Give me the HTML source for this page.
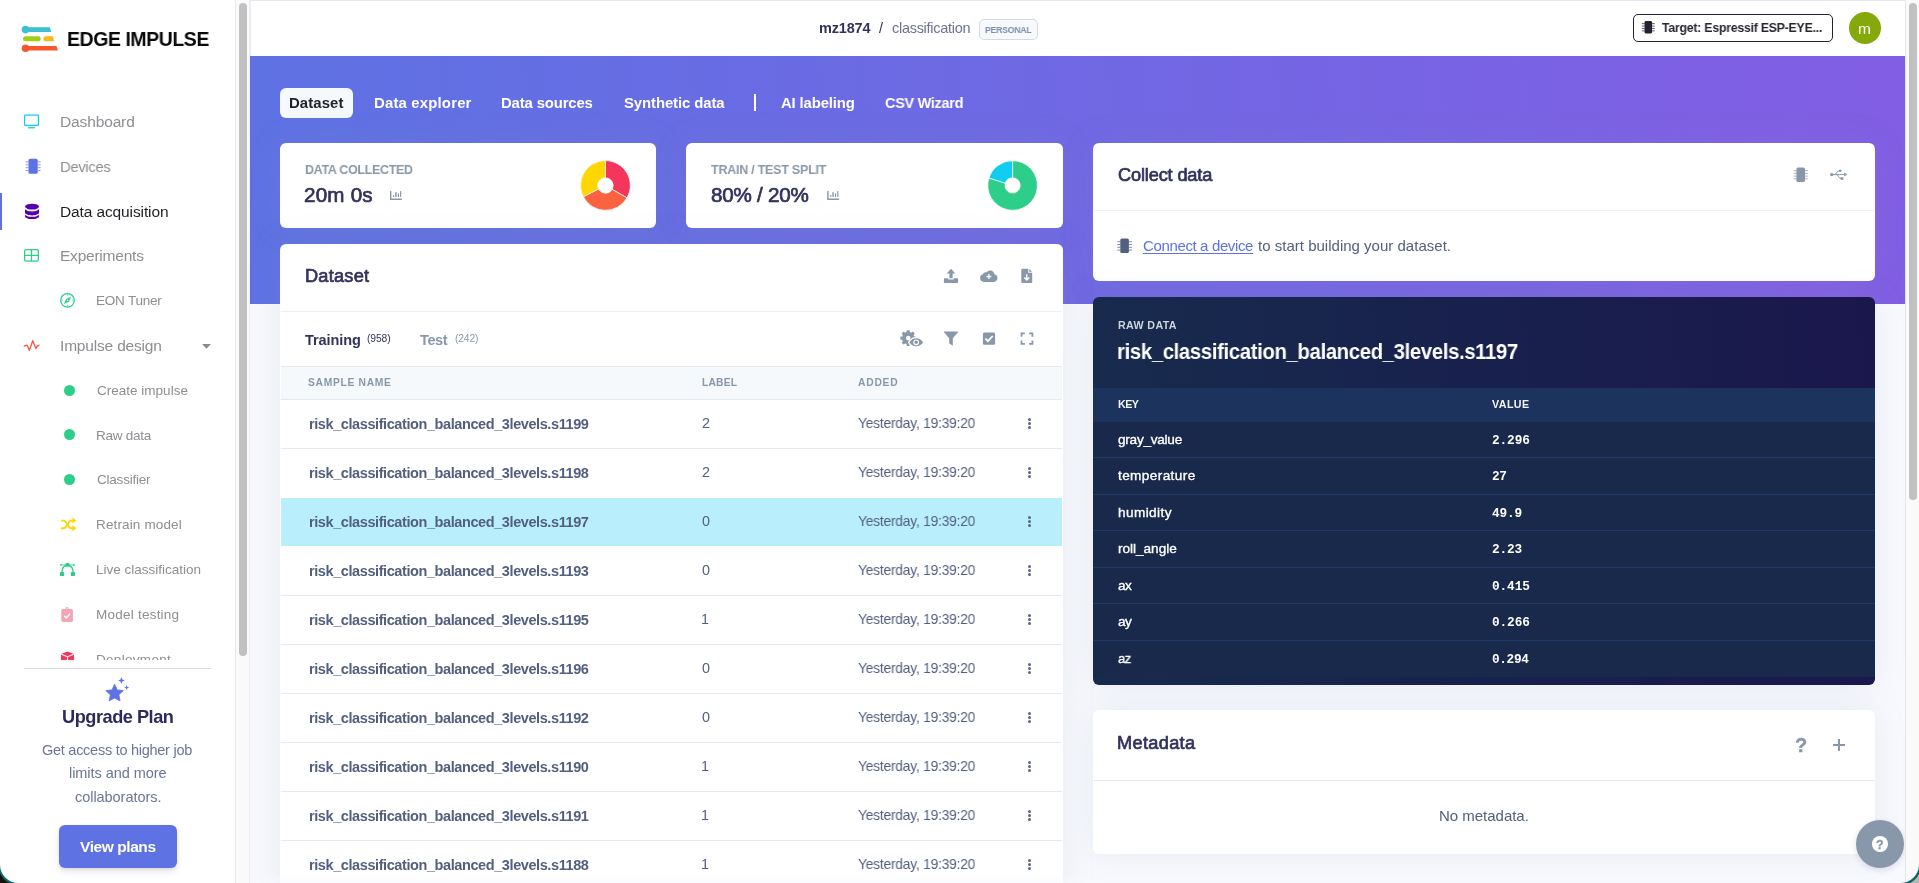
<!DOCTYPE html>
<html lang="en">
<head>
<meta charset="utf-8">
<title>Data acquisition - classification - Edge Impulse</title>
<style>
*{box-sizing:border-box;margin:0;padding:0}
html,body{width:1919px;height:883px;overflow:hidden;background:#f8f9fe;font-family:"Liberation Sans",sans-serif;color:#32325d}
body{position:relative}
.a{position:absolute}
.t{position:absolute;white-space:pre;z-index:2;will-change:transform}
svg{position:absolute;overflow:visible}
.card{position:absolute;background:#fff;border-radius:6px;box-shadow:0 0 32px 0 rgba(136,152,170,.15)}
.hr{position:absolute;height:1px;background:#f0f1f5}
.rowline{position:absolute;left:281px;width:781px;height:1px;background:#e6e9ef}
.kvline{position:absolute;left:1093px;width:782px;height:1px;background:#1f3a68}
.dot{position:absolute;left:64px;width:11px;height:11px;border-radius:50%;background:#2dce89}
.kb{position:absolute;left:1028px;width:3.4px;height:3.4px;border-radius:50%;background:#5a6785}
</style>
</head>
<body>
<!-- ===== page backgrounds ===== -->
<div class="a" id="hero" style="left:250px;top:56px;width:1656px;height:248px;background:linear-gradient(87deg,#5e72e4 0,#825ee4 100%)"></div>
<div class="a" id="topbar" style="left:250px;top:0;width:1656px;height:56px;background:#fff;border-top:1px solid #e4e7ee;border-left:1px solid #e9ecf1"></div>
<!-- sidebar -->
<div class="a" id="sidebar" style="left:0;top:0;width:235px;height:883px;background:#fff"></div>
<div class="a" style="left:235px;top:0;width:15px;height:883px;background:#fafafa;border-left:1px solid #e8e8e8;border-right:1px solid #eeeef2"></div>
<div class="a" style="left:239px;top:3px;width:8px;height:653px;border-radius:4px;background:#c1c1c1"></div>
<div class="a" style="left:0;top:193px;width:2px;height:37px;background:#5e72e4"></div>
<!-- page scrollbar -->
<div class="a" style="left:1905px;top:0;width:14px;height:883px;background:#fafafa;border-left:1px solid #e4e5ea;z-index:5"></div>
<div class="a" style="left:1909px;top:3px;width:8px;height:497px;border-radius:4px;background:#c1c1c1;z-index:6"></div>

<!-- ===== sidebar content ===== -->
<svg style="left:0;top:0" width="236" height="883" viewBox="0 0 236 883">
  <!-- logo -->
  <g>
    <circle cx="25.5" cy="29.6" r="3.8" fill="#3bbfd1"/>
    <path d="M25 27.2H49.9L51.3 32.1H25Z" fill="#3bbfd1"/>
    <rect x="23" y="36.3" width="17.7" height="5" rx="2.5" fill="#a2cf14"/>
    <path d="M45.9 36.3H52.7L54.3 41.3H45.9A2.5 2.5 0 0 1 45.9 36.3Z" fill="#fdb714"/>
    <circle cx="25.5" cy="48.2" r="3.8" fill="#f9582c"/>
    <path d="M25 46H56.4L58 50.4H25Z" fill="#f9582c"/>
  </g>
  <!-- dashboard monitor -->
  <rect x="24.6" y="115.2" width="13.8" height="10.2" rx=".6" fill="none" stroke="#11cdef" stroke-width="1.2"/>
  <rect x="28" y="127.1" width="7" height="1.3" fill="#11cdef"/>
  <!-- devices chip -->
  <g fill="#5e72e4">
    <rect x="28.5" y="158.8" width="9.2" height="15" rx="1.6"/>
    <g opacity=".75">
      <rect x="25.6" y="161.4" width="2.9" height="1"/><rect x="25.6" y="164.3" width="2.9" height="1"/><rect x="25.6" y="167.2" width="2.9" height="1"/><rect x="25.6" y="170.1" width="2.9" height="1"/>
      <rect x="37.7" y="161.4" width="2.9" height="1"/><rect x="37.7" y="164.3" width="2.9" height="1"/><rect x="37.7" y="167.2" width="2.9" height="1"/><rect x="37.7" y="170.1" width="2.9" height="1"/>
    </g>
  </g>
  <!-- database -->
  <g fill="#5603ad">
    <ellipse cx="32.05" cy="206.6" rx="7.05" ry="2.9"/>
    <path d="M25 208.6c0 1.6 3.2 2.9 7.05 2.9s7.05-1.3 7.05-2.9v3.9c0 1.6-3.2 2.9-7.05 2.9S25 214.100 25 212.500Z"/>
    <path d="M25 213.900c0 1.6 3.2 2.9 7.05 2.9s7.05-1.3 7.05-2.9v2.300c0 1.6-3.2 2.900-7.05 2.900S25 217.800 25 216.200Z"/>
  </g>
  <!-- experiments table -->
  <g fill="none" stroke="#2dce89" stroke-width="1.3">
    <rect x="24.65" y="249.65" width="13.7" height="11.5" rx="1.3"/>
    <path d="M24.65 255.4H38.35M31.5 249.65V261.15"/>
  </g>
  <!-- compass -->
  <g>
    <circle cx="67.5" cy="300.3" r="6.8" fill="none" stroke="#2dce89" stroke-width="1.25"/>
    <path d="M71.1 296.7L68.9 301.7L63.9 303.9L66.1 298.9Z" fill="#2dce89"/>
    <circle cx="67.5" cy="300.3" r=".8" fill="#fff"/>
    <path d="M67.5 294.2v1.2M67.5 305.2v1.2M61.4 300.3h1.2M72.4 300.3h1.2" stroke="#2dce89" stroke-width=".9"/>
  </g>
  <!-- pulse -->
  <path d="M24.2 346.1L27 345.1L29.4 350.4L32.75 340.7L35.9 348.6L37.1 346.2L39 345.3" fill="none" stroke="#f5533d" stroke-width="1.3" stroke-linejoin="round" stroke-linecap="round"/>
  <!-- caret -->
  <path d="M202.1 344H210.9L206.5 348.75Z" fill="#8a8a8e"/>
  <!-- shuffle -->
  <g fill="none" stroke="#ffd600" stroke-width="1.9">
    <path d="M61 520.6H63.6C66.6 520.6 68.300 528.3 71.200 528.3H73"/>
    <path d="M61 528.3H63.6C66.6 528.3 68.300 520.6 71.200 520.6H73"/>
  </g>
  <path d="M72.400 517.6L76.500 520.600L72.400 523.6ZM72.400 525.3L76.500 528.300L72.400 531.3Z" fill="#ffd600"/>
  <!-- bezier -->
  <g fill="#2dce89">
    <rect x="60" y="572" width="4.100" height="4" rx=".6"/><rect x="70.900" y="572" width="4.100" height="4" rx=".6"/>
    <rect x="65.600" y="563" width="3.800" height="3.800" rx=".6"/>
    <circle cx="61" cy="564.900" r=".9"/><circle cx="74" cy="564.900" r=".9"/>
  </g>
  <g fill="none" stroke="#2dce89">
    <path d="M61.500 564.900H73.500" stroke-width=".8"/>
    <path d="M62 572.200C62 568.400 63.800 566.100 66 565.500M73 572.200C73 568.400 71.200 566.100 69 565.500" stroke-width="1.3"/>
  </g>
  <!-- clipboard check -->
  <g>
    <path d="M62.900 609H71.300A1.600 1.600 0 0 1 72.900 610.600V620.300A1.600 1.600 0 0 1 71.300 621.900H62.900A1.600 1.600 0 0 1 61.300 620.300V610.600A1.600 1.600 0 0 1 62.900 609Z" fill="#f3a4b5"/>
    <circle cx="67.100" cy="608.700" r="1.700" fill="#f3a4b5"/><circle cx="67.100" cy="608.600" r=".55" fill="#fff"/>
    <path d="M64.300 615.900L66.300 617.900L70 613.800" fill="none" stroke="#fff" stroke-width="1.500"/>
  </g>
  <!-- deployment cube (clipped by upgrade panel) -->
  <g>
    <path d="M67.500 651.500L74 654V662L67.500 664.600L61 662V654Z" fill="#f5365c"/>
    <path d="M61.300 654.200L67.500 656.700L73.700 654.200M67.500 656.700V664" fill="none" stroke="#fff" stroke-width="1.100"/>
  </g>
</svg>
<div class="dot" style="top:385.2px"></div>
<div class="dot" style="top:429.300px"></div>
<div class="dot" style="top:474.300px"></div>

<!-- upgrade panel (covers clipped nav) -->
<div class="a" style="left:0;top:660px;width:235px;height:223px;background:#fff;z-index:2"></div>
<div class="a" style="left:24px;top:668px;width:187px;height:1px;background:#dcdcdf;z-index:3"></div>
<svg style="left:0;top:660px;z-index:3" width="235" height="60" viewBox="0 660 235 60">
  <g fill="#5e72e4">
    <path d="M114.600 684.200L117.250 689.900L123.400 690.600L118.850 694.850L120.050 700.900L114.600 697.900L109.150 700.900L110.350 694.850L105.800 690.600L111.950 689.900Z" stroke="#5e72e4" stroke-width=".8" stroke-linejoin="round"/>
    <path d="M121.400 677.100L122.300 679.600L124.800 680.500L122.300 681.400L121.400 683.900L120.500 681.400L118 680.500L120.500 679.600Z"/>
    <path d="M126.700 684.900L127.400 686.900L129.400 687.600L127.400 688.300L126.700 690.300L126 688.300L124 687.600L126 686.900Z"/>
  </g>
</svg>
<div class="a" style="left:59px;top:825px;width:118px;height:43px;border-radius:6px;background:#5e72e4;box-shadow:0 4px 6px rgba(50,50,93,.11),0 1px 3px rgba(0,0,0,.08);z-index:3"></div>
<!-- window corners -->
<svg style="left:0;top:853px;z-index:9" width="30" height="30" viewBox="0 853 30 30">
  <path d="M0 858V883H18.4A18.4 18.4 0 0 1 0 865Z" fill="#0a6b70"/>
  <path d="M0 873.3V883H9.2A20.2 20.2 0 0 1 0 873.3Z" fill="#1a0f0b"/>
</svg>
<svg style="left:1889px;top:853px;z-index:9" width="30" height="30" viewBox="1889 853 30 30">
  <path d="M1919 862V883H1900.500A18.500 18.500 0 0 0 1919 865Z" fill="#06635f"/>
  <path d="M1919 873.8V883H1910.3A20.5 20.5 0 0 0 1919 873.8Z" fill="#b4b4b4"/>
</svg>

<!-- ===== top bar ===== -->
<div class="a" style="left:979px;top:19px;width:59px;height:21px;border:1px solid #d3dae6;border-radius:5px;background:#f7f9fc"></div>
<div class="a" style="left:1633px;top:14px;width:200px;height:28px;border:1px solid #23232d;border-radius:5px;background:#fff"></div>
<svg style="left:1640px;top:20px" width="16" height="15" viewBox="1640 20 16 15">
  <g fill="#23232d">
    <rect x="1644.500" y="21" width="7.600" height="12.500" rx="1.400"/>
    <g opacity=".8"><rect x="1641.900" y="23.200" width="2.600" height=".9"/><rect x="1641.900" y="25.600" width="2.600" height=".9"/><rect x="1641.900" y="28" width="2.600" height=".9"/><rect x="1641.900" y="30.400" width="2.600" height=".9"/>
    <rect x="1652.100" y="23.200" width="2.600" height=".9"/><rect x="1652.100" y="25.600" width="2.600" height=".9"/><rect x="1652.100" y="28" width="2.600" height=".9"/><rect x="1652.100" y="30.400" width="2.600" height=".9"/></g>
  </g>
</svg>
<div class="a" style="left:1849px;top:12px;width:32px;height:32px;border-radius:50%;background:#85a80a"></div>

<!-- ===== tabs ===== -->
<div class="a" style="left:280px;top:87.500px;width:73px;height:30.500px;border-radius:6px;background:#f6f9fc"></div>
<div class="a" style="left:754px;top:94px;width:2px;height:17px;background:#fff"></div>

<!-- ===== stat cards ===== -->
<div class="card" style="left:280px;top:143px;width:376px;height:85px"></div>
<div class="card" style="left:686px;top:143px;width:377px;height:85px"></div>
<svg style="left:380px;top:185px" width="470" height="20" viewBox="380 185 470 20">
  <g fill="#8898aa"><path d="M390.00 190.9h1.4v7.6h10.5v1.4h-11.9Z"/><rect x="393.00" y="194.9" width="1.2" height="2" rx=".5"/><rect x="395.00" y="192.1" width="1.8" height="4.8" rx=".4" opacity=".8"/><rect x="397.80" y="193.2" width="1.2" height="3.7" rx=".5"/><rect x="400.00" y="191" width="1.2" height="5.9" rx=".5"/></g>
  <g fill="#8898aa"><path d="M827.20 190.9h1.4v7.6h10.5v1.4h-11.9Z"/><rect x="830.20" y="194.9" width="1.2" height="2" rx=".5"/><rect x="832.20" y="192.1" width="1.8" height="4.8" rx=".4" opacity=".8"/><rect x="835.00" y="193.2" width="1.2" height="3.7" rx=".5"/><rect x="837.20" y="191" width="1.2" height="5.9" rx=".5"/></g>
</svg>
<svg style="left:570px;top:150px" width="480" height="70" viewBox="570 150 480 70"><path d="M605.45 160.60A24.85 24.85 0 0 1 626.97 197.87L612.12 189.30A7.7 7.7 0 0 0 605.45 177.75Z" fill="#f5365c" stroke="#fff" stroke-width=".7"/><path d="M626.97 197.87A24.85 24.85 0 0 1 583.31 196.73L598.59 188.95A7.7 7.7 0 0 0 612.12 189.30Z" fill="#fb6340" stroke="#fff" stroke-width=".7"/><path d="M583.31 196.73A24.85 24.85 0 0 1 605.45 160.60L605.45 177.75A7.7 7.7 0 0 0 598.59 188.95Z" fill="#ffd600" stroke="#fff" stroke-width=".7"/><path d="M1012.60 160.65A24.8 24.8 0 1 1 988.95 177.99L1005.35 183.16A7.6 7.6 0 1 0 1012.60 177.85Z" fill="#2dce89" stroke="#fff" stroke-width=".7"/><path d="M988.95 177.99A24.8 24.8 0 0 1 1012.60 160.65L1012.60 177.85A7.6 7.6 0 0 0 1005.35 183.16Z" fill="#11cdef" stroke="#fff" stroke-width=".7"/></svg>

<!-- ===== dataset card ===== -->
<div class="card" style="left:280px;top:244px;width:783px;height:660px"></div>
<div class="hr" style="left:281px;top:311px;width:781px"></div>
<div class="a" style="left:281px;top:366px;width:781px;height:34px;background:#f6f9fc;border-top:1px solid #e6e9ef;border-bottom:1px solid #e6e9ef"></div>
<div class="a" style="left:281px;top:498px;width:781px;height:48px;background:#b9effc"></div>
<div class="rowline" style="top:448px"></div><div class="rowline" style="top:595px"></div><div class="rowline" style="top:644px"></div><div class="rowline" style="top:693px"></div><div class="rowline" style="top:742px"></div><div class="rowline" style="top:791px"></div><div class="rowline" style="top:840px"></div>
<svg style="left:895px;top:260px" width="145" height="95" viewBox="895 260 145 95">
  <g fill="#8898aa">
    <!-- upload -->
    <path d="M951 268.750L955.300 273.400H952.600V278.300H949.400V273.400H946.700Z"/>
    <path d="M944.600 278.200H948.300V279.500H953.700V278.200H957.400A.7 .7 0 0 1 958.100 278.900V282.200A.7 .7 0 0 1 957.400 282.900H944.600A.7 .7 0 0 1 943.900 282.200V278.900A.7 .7 0 0 1 944.600 278.200Z"/>
    <!-- cloud -->
    <path d="M984 281.900A3.900 3.900 0 0 1 982.800 274.300A3.300 3.300 0 0 1 986.600 272.300A4.300 4.300 0 0 1 994.400 274.200A3.900 3.900 0 0 1 993.700 281.900Z"/>
    <!-- file download -->
    <path d="M1022.300 268.750H1028.300V272.700H1032.200V281.900A1 1 0 0 1 1031.200 282.900H1022.300A1 1 0 0 1 1021.300 281.900V269.750A1 1 0 0 1 1022.300 268.750ZM1029.200 268.900L1032.100 271.800H1029.200Z"/>
    <!-- gear -->
    <path d="M906.900 330.200H909.500L909.900 332.100L911.300 332.700L912.900 331.600L914.700 333.400L913.600 335L914.200 336.400L916.100 336.800V339.400L914.200 339.800L913.600 341.200L914.700 342.800L912.900 344.600L911.300 343.500L909.900 344.100L909.500 346H906.900L906.500 344.100L905.100 343.500L903.500 344.600L901.700 342.800L902.800 341.200L902.200 339.800L900.300 339.400V336.800L902.200 336.400L902.800 335L901.700 333.400L903.500 331.600L905.100 332.700L906.500 332.100Z"/>
    <!-- filter -->
    <path d="M944.400 331.500H957.600A.5 .5 0 0 1 958 332.300L952.800 338.300V345.800L949.200 343.300V338.300L944 332.300A.5 .5 0 0 1 944.400 331.500Z"/>
    <!-- check square -->
    <rect x="982.900" y="332.500" width="12.200" height="12.200" rx="1.500"/>
  </g>
  <circle cx="908.200" cy="338.100" r="2.300" fill="#fff"/>
  <!-- eye -->
  <path d="M908.600 342.300C910.600 339 913.400 337.700 916.200 337.700S921.800 339 923.900 342.300C921.800 345.600 919 346.900 916.200 346.900S910.600 345.600 908.600 342.300Z" fill="#8898aa" stroke="#fff" stroke-width="1.300"/>
  <circle cx="916.200" cy="342.300" r="2.900" fill="#fff"/><circle cx="916.200" cy="342.300" r="1.700" fill="#8898aa"/>
  <!-- cloud plus -->
  <path d="M988.900 274.100V278.900M986.500 276.500H991.300" stroke="#fff" stroke-width="1.300" fill="none"/>
  <!-- file arrow -->
  <path d="M1026.750 274.300V279.700M1024.300 277.500L1026.750 280L1029.200 277.500" stroke="#fff" stroke-width="1.400" fill="none"/>
  <!-- check -->
  <path d="M985.400 338.700L987.900 341.200L992.700 336" stroke="#fff" stroke-width="1.700" fill="none"/>
  <!-- expand -->
  <path d="M1021.500 336.700V333.400H1024.800M1029.100 333.400H1032.400V336.700M1032.400 340.500V343.800H1029.100M1024.800 343.800H1021.500V340.500" stroke="#8898aa" stroke-width="1.800" fill="none"/>
</svg>
<div class="kb" style="top:418.0px"></div><div class="kb" style="top:421.9px"></div><div class="kb" style="top:425.8px"></div><div class="kb" style="top:467.0px"></div><div class="kb" style="top:470.9px"></div><div class="kb" style="top:474.8px"></div><div class="kb" style="top:516.0px"></div><div class="kb" style="top:519.9px"></div><div class="kb" style="top:523.8px"></div><div class="kb" style="top:565.0px"></div><div class="kb" style="top:568.9px"></div><div class="kb" style="top:572.8px"></div><div class="kb" style="top:614.0px"></div><div class="kb" style="top:617.9px"></div><div class="kb" style="top:621.8px"></div><div class="kb" style="top:663.0px"></div><div class="kb" style="top:666.9px"></div><div class="kb" style="top:670.8px"></div><div class="kb" style="top:712.0px"></div><div class="kb" style="top:715.9px"></div><div class="kb" style="top:719.8px"></div><div class="kb" style="top:761.0px"></div><div class="kb" style="top:764.9px"></div><div class="kb" style="top:768.8px"></div><div class="kb" style="top:810.0px"></div><div class="kb" style="top:813.9px"></div><div class="kb" style="top:817.8px"></div><div class="kb" style="top:859.0px"></div><div class="kb" style="top:862.9px"></div><div class="kb" style="top:866.8px"></div>
<!-- fade at bottom of dataset card -->
<div class="a" style="left:270px;top:873px;width:810px;height:10px;background:linear-gradient(to bottom,rgba(248,249,254,0),rgba(248,249,254,.6));z-index:4"></div>

<!-- ===== collect data ===== -->
<div class="card" style="left:1093px;top:143px;width:782px;height:138px"></div>
<div class="hr" style="left:1094px;top:210px;width:780px"></div>
<svg style="left:1110px;top:160px" width="745" height="100" viewBox="1110 160 745 100">
  <g fill="#525f7f">
    <rect x="1120.300" y="238.500" width="8.600" height="14.600" rx="1.500"/>
    <g opacity=".75"><rect x="1117.300" y="241.200" width="3" height="1"/><rect x="1117.300" y="244" width="3" height="1"/><rect x="1117.300" y="246.800" width="3" height="1"/><rect x="1117.300" y="249.600" width="3" height="1"/>
    <rect x="1128.900" y="241.200" width="3" height="1"/><rect x="1128.900" y="244" width="3" height="1"/><rect x="1128.900" y="246.800" width="3" height="1"/><rect x="1128.900" y="249.600" width="3" height="1"/></g>
  </g>
  <g fill="#8898aa">
    <rect x="1796.400" y="167.600" width="8.600" height="14.300" rx="1.500"/>
    <g opacity=".75"><rect x="1793.700" y="170.200" width="2.700" height="1"/><rect x="1793.700" y="172.900" width="2.700" height="1"/><rect x="1793.700" y="175.600" width="2.700" height="1"/><rect x="1793.700" y="178.300" width="2.700" height="1"/>
    <rect x="1805" y="170.200" width="2.800" height="1"/><rect x="1805" y="172.900" width="2.800" height="1"/><rect x="1805" y="175.600" width="2.800" height="1"/><rect x="1805" y="178.300" width="2.800" height="1"/></g>
    <!-- usb -->
    <circle cx="1831.700" cy="174.600" r="1.700"/>
    <path d="M1844.200 172.600L1847.300 174.600L1844.200 176.600Z"/>
    <circle cx="1840.200" cy="170.700" r="1.300"/>
    <rect x="1840.700" y="177.200" width="2.700" height="2.700"/>
  </g>
  <g fill="none" stroke="#8898aa" stroke-width="1">
    <path d="M1832 174.600H1845"/>
    <path d="M1834.500 174.600C1836.500 174.600 1836.500 170.700 1839.500 170.700"/>
    <path d="M1836.500 174.600C1838.500 174.600 1838.500 178.500 1841 178.500"/>
  </g>
</svg>

<!-- ===== raw data ===== -->
<div class="a" style="left:1093px;top:297px;width:782px;height:388px;border-radius:6px;background:linear-gradient(87deg,#172b4d 0,#1a174d 100%);box-shadow:0 0 32px 0 rgba(136,152,170,.15);overflow:hidden">
  <div class="a" style="left:0;top:91px;width:782px;height:34px;background:#1c345d"></div>
  <div class="a" style="left:0;top:125px;width:782px;height:255px;background:#19294b"></div>
</div>
<div class="kvline" style="top:457.0px"></div><div class="kvline" style="top:493.5px"></div><div class="kvline" style="top:530.0px"></div><div class="kvline" style="top:566.5px"></div><div class="kvline" style="top:603.0px"></div><div class="kvline" style="top:639.5px"></div>

<!-- ===== metadata ===== -->
<div class="card" style="left:1093px;top:710px;width:782px;height:144px"></div>
<div class="hr" style="left:1094px;top:780px;width:780px;background:#e6e9ef"></div>
<div class="a" style="left:1832.600px;top:743.700px;width:12.400px;height:2.300px;background:#8898aa"></div>
<div class="a" style="left:1837.650px;top:738.600px;width:2.300px;height:12.400px;background:#8898aa"></div>
<!-- help -->
<div class="a" style="left:1856px;top:820px;width:48px;height:48px;border-radius:50%;background:#8898aa;z-index:4;box-shadow:0 2px 6px rgba(50,50,93,.15)"></div>
<div class="a" style="left:1872.100px;top:836.300px;width:15.600px;height:15.600px;border-radius:50%;background:#fff;z-index:4"></div>

<!-- ===== texts ===== -->
<span class="t" style="left:67.44px;top:25px;font-size:20.3px;line-height:28px;letter-spacing:-0.483px;color:#0a0a0a;font-weight:bold;transform:scaleX(0.9623);transform-origin:0 0;">EDGE IMPULSE</span>
<span class="t" style="left:59.60px;top:110px;font-size:15.5px;line-height:23px;letter-spacing:-0.132px;color:#8e8e93;">Dashboard</span>
<span class="t" style="left:59.65px;top:155px;font-size:15.5px;line-height:23px;letter-spacing:-0.317px;color:#8e8e93;transform:scaleX(0.9528);transform-origin:0 0;">Devices</span>
<span class="t" style="left:59.60px;top:200px;font-size:15.5px;line-height:23px;letter-spacing:-0.118px;color:#1f1f24;">Data acquisition</span>
<span class="t" style="left:59.60px;top:244px;font-size:15.5px;line-height:23px;letter-spacing:-0.224px;color:#8e8e93;">Experiments</span>
<span class="t" style="left:95.50px;top:290px;font-size:13.5px;line-height:21px;letter-spacing:-0.209px;color:#8e8e93;">EON Tuner</span>
<span class="t" style="left:59.60px;top:334px;font-size:15.5px;line-height:23px;letter-spacing:-0.180px;color:#8e8e93;">Impulse design</span>
<span class="t" style="left:96.50px;top:380px;font-size:13.5px;line-height:21px;letter-spacing:0.009px;color:#8e8e93;">Create impulse</span>
<span class="t" style="left:95.50px;top:425px;font-size:13.5px;line-height:21px;letter-spacing:-0.253px;color:#8e8e93;">Raw data</span>
<span class="t" style="left:96.50px;top:469px;font-size:13.5px;line-height:21px;letter-spacing:-0.213px;color:#8e8e93;">Classifier</span>
<span class="t" style="left:95.50px;top:514px;font-size:13.5px;line-height:21px;letter-spacing:0.143px;color:#8e8e93;">Retrain model</span>
<span class="t" style="left:95.50px;top:559px;font-size:13.5px;line-height:21px;letter-spacing:-0.002px;color:#8e8e93;">Live classification</span>
<span class="t" style="left:95.50px;top:604px;font-size:13.5px;line-height:21px;letter-spacing:0.234px;color:#8e8e93;">Model testing</span>
<span class="t" style="left:95.50px;top:649px;font-size:13.5px;line-height:21px;letter-spacing:0.302px;color:#8e8e93;z-index:1;">Deployment</span>
<span class="t" style="left:61.80px;top:704px;font-size:18.2px;line-height:26px;letter-spacing:-0.484px;color:#2b2c5c;font-weight:bold;z-index:3;">Upgrade Plan</span>
<span class="t" style="left:42.40px;top:739px;font-size:14.5px;line-height:22px;letter-spacing:-0.265px;color:#6a7694;z-index:3;">Get access to higher job</span>
<span class="t" style="left:68.80px;top:762px;font-size:14.5px;line-height:22px;letter-spacing:-0.053px;color:#6a7694;z-index:3;">limits and more</span>
<span class="t" style="left:74.80px;top:786px;font-size:14.5px;line-height:22px;letter-spacing:-0.047px;color:#6a7694;z-index:3;">collaborators.</span>
<span class="t" style="left:80.00px;top:835px;font-size:15.5px;line-height:23px;letter-spacing:-0.423px;color:#ffffff;font-weight:bold;z-index:3;">View plans</span>
<span class="t" style="left:819.00px;top:17px;font-size:14.5px;line-height:22px;letter-spacing:-0.167px;color:#32325d;font-weight:bold;">mz1874</span>
<span class="t" style="left:879.00px;top:17px;font-size:14.5px;line-height:22px;letter-spacing:0.000px;color:#32325d;">/</span>
<span class="t" style="left:892.10px;top:17px;font-size:14.5px;line-height:22px;letter-spacing:-0.287px;color:#6b7391;">classification</span>
<span class="t" style="left:985.40px;top:21px;font-size:9.8px;line-height:17px;letter-spacing:-0.272px;color:#7d90ad;font-weight:bold;transform:scaleX(0.8888);transform-origin:0 0;">PERSONAL</span>
<span class="t" style="left:1662.40px;top:17px;font-size:13.5px;line-height:21px;letter-spacing:-0.236px;color:#26262f;font-weight:bold;transform:scaleX(0.9084);transform-origin:0 0;">Target: Espressif ESP-EYE...</span>
<span class="t" style="left:1858.20px;top:17px;font-size:15.5px;line-height:23px;letter-spacing:0.000px;color:#ffffff;">m</span>
<span class="t" style="left:288.70px;top:92px;font-size:14.9px;line-height:22px;letter-spacing:0.110px;color:#212529;font-weight:bold;">Dataset</span>
<span class="t" style="left:373.50px;top:92px;font-size:14.9px;line-height:22px;letter-spacing:0.185px;color:#ffffff;font-weight:bold;">Data explorer</span>
<span class="t" style="left:500.70px;top:92px;font-size:14.9px;line-height:22px;letter-spacing:-0.149px;color:#ffffff;font-weight:bold;">Data sources</span>
<span class="t" style="left:624.10px;top:92px;font-size:14.9px;line-height:22px;letter-spacing:-0.092px;color:#ffffff;font-weight:bold;">Synthetic data</span>
<span class="t" style="left:781.10px;top:92px;font-size:14.9px;line-height:22px;letter-spacing:-0.149px;color:#ffffff;font-weight:bold;">AI labeling</span>
<span class="t" style="left:885.40px;top:92px;font-size:14.9px;line-height:22px;letter-spacing:-0.324px;color:#ffffff;font-weight:bold;transform:scaleX(0.9736);transform-origin:0 0;">CSV Wizard</span>
<span class="t" style="left:305.40px;top:159px;font-size:13.4px;line-height:21px;letter-spacing:-0.326px;color:#8898aa;font-weight:bold;transform:scaleX(0.9312);transform-origin:0 0;">DATA COLLECTED</span>
<span class="t" style="left:304.40px;top:180px;font-size:20.6px;line-height:29px;letter-spacing:0.213px;color:#32325d;-webkit-text-stroke:.7px #32325d;">20m 0s</span>
<span class="t" style="left:711.40px;top:159px;font-size:13.4px;line-height:21px;letter-spacing:-0.265px;color:#8898aa;font-weight:bold;transform:scaleX(0.9343);transform-origin:0 0;">TRAIN / TEST SPLIT</span>
<span class="t" style="left:711.40px;top:180px;font-size:20.6px;line-height:29px;letter-spacing:-0.211px;color:#32325d;-webkit-text-stroke:.7px #32325d;">80% / 20%</span>
<span class="t" style="left:304.70px;top:263px;font-size:18.2px;line-height:26px;letter-spacing:0.229px;color:#32325d;-webkit-text-stroke:.7px #32325d;">Dataset</span>
<span class="t" style="left:305.30px;top:329px;font-size:14.5px;line-height:22px;letter-spacing:-0.091px;color:#32325d;font-weight:bold;">Training</span>
<span class="t" style="left:366.90px;top:330px;font-size:10.3px;line-height:17px;letter-spacing:-0.102px;color:#32325d;">(958)</span>
<span class="t" style="left:420.40px;top:329px;font-size:14.5px;line-height:22px;letter-spacing:-0.403px;color:#8898aa;font-weight:bold;">Test</span>
<span class="t" style="left:454.80px;top:330px;font-size:10.3px;line-height:17px;letter-spacing:-0.152px;color:#8898aa;">(242)</span>
<span class="t" style="left:308.40px;top:374px;font-size:10.3px;line-height:17px;letter-spacing:0.678px;color:#8898aa;font-weight:bold;">SAMPLE NAME</span>
<span class="t" style="left:701.50px;top:374px;font-size:10.3px;line-height:17px;letter-spacing:0.193px;color:#8898aa;font-weight:bold;">LABEL</span>
<span class="t" style="left:857.50px;top:374px;font-size:10.3px;line-height:17px;letter-spacing:0.756px;color:#8898aa;font-weight:bold;">ADDED</span>
<span class="t" style="left:308.50px;top:413px;font-size:14.5px;line-height:22px;letter-spacing:-0.409px;color:#525f7f;font-weight:bold;">risk_classification_balanced_3levels.s1199</span>
<span class="t" style="left:701.70px;top:412px;font-size:14.4px;line-height:22px;letter-spacing:0.000px;color:#525f7f;">2</span>
<span class="t" style="left:857.50px;top:412px;font-size:14.4px;line-height:22px;letter-spacing:-0.246px;color:#525f7f;transform:scaleX(0.9616);transform-origin:0 0;">Yesterday, 19:39:20</span>
<span class="t" style="left:308.50px;top:462px;font-size:14.5px;line-height:22px;letter-spacing:-0.409px;color:#525f7f;font-weight:bold;">risk_classification_balanced_3levels.s1198</span>
<span class="t" style="left:701.70px;top:461px;font-size:14.4px;line-height:22px;letter-spacing:0.000px;color:#525f7f;">2</span>
<span class="t" style="left:857.50px;top:461px;font-size:14.4px;line-height:22px;letter-spacing:-0.246px;color:#525f7f;transform:scaleX(0.9616);transform-origin:0 0;">Yesterday, 19:39:20</span>
<span class="t" style="left:308.50px;top:511px;font-size:14.5px;line-height:22px;letter-spacing:-0.409px;color:#525f7f;font-weight:bold;">risk_classification_balanced_3levels.s1197</span>
<span class="t" style="left:701.70px;top:510px;font-size:14.4px;line-height:22px;letter-spacing:0.000px;color:#525f7f;">0</span>
<span class="t" style="left:857.50px;top:510px;font-size:14.4px;line-height:22px;letter-spacing:-0.246px;color:#525f7f;transform:scaleX(0.9616);transform-origin:0 0;">Yesterday, 19:39:20</span>
<span class="t" style="left:308.50px;top:560px;font-size:14.5px;line-height:22px;letter-spacing:-0.409px;color:#525f7f;font-weight:bold;">risk_classification_balanced_3levels.s1193</span>
<span class="t" style="left:701.70px;top:559px;font-size:14.4px;line-height:22px;letter-spacing:0.000px;color:#525f7f;">0</span>
<span class="t" style="left:857.50px;top:559px;font-size:14.4px;line-height:22px;letter-spacing:-0.246px;color:#525f7f;transform:scaleX(0.9616);transform-origin:0 0;">Yesterday, 19:39:20</span>
<span class="t" style="left:308.50px;top:609px;font-size:14.5px;line-height:22px;letter-spacing:-0.409px;color:#525f7f;font-weight:bold;">risk_classification_balanced_3levels.s1195</span>
<span class="t" style="left:700.70px;top:608px;font-size:14.4px;line-height:22px;letter-spacing:0.000px;color:#525f7f;">1</span>
<span class="t" style="left:857.50px;top:608px;font-size:14.4px;line-height:22px;letter-spacing:-0.246px;color:#525f7f;transform:scaleX(0.9616);transform-origin:0 0;">Yesterday, 19:39:20</span>
<span class="t" style="left:308.50px;top:658px;font-size:14.5px;line-height:22px;letter-spacing:-0.409px;color:#525f7f;font-weight:bold;">risk_classification_balanced_3levels.s1196</span>
<span class="t" style="left:701.70px;top:657px;font-size:14.4px;line-height:22px;letter-spacing:0.000px;color:#525f7f;">0</span>
<span class="t" style="left:857.50px;top:657px;font-size:14.4px;line-height:22px;letter-spacing:-0.246px;color:#525f7f;transform:scaleX(0.9616);transform-origin:0 0;">Yesterday, 19:39:20</span>
<span class="t" style="left:308.50px;top:707px;font-size:14.5px;line-height:22px;letter-spacing:-0.409px;color:#525f7f;font-weight:bold;">risk_classification_balanced_3levels.s1192</span>
<span class="t" style="left:701.70px;top:706px;font-size:14.4px;line-height:22px;letter-spacing:0.000px;color:#525f7f;">0</span>
<span class="t" style="left:857.50px;top:706px;font-size:14.4px;line-height:22px;letter-spacing:-0.246px;color:#525f7f;transform:scaleX(0.9616);transform-origin:0 0;">Yesterday, 19:39:20</span>
<span class="t" style="left:308.50px;top:756px;font-size:14.5px;line-height:22px;letter-spacing:-0.409px;color:#525f7f;font-weight:bold;">risk_classification_balanced_3levels.s1190</span>
<span class="t" style="left:700.70px;top:755px;font-size:14.4px;line-height:22px;letter-spacing:0.000px;color:#525f7f;">1</span>
<span class="t" style="left:857.50px;top:755px;font-size:14.4px;line-height:22px;letter-spacing:-0.246px;color:#525f7f;transform:scaleX(0.9616);transform-origin:0 0;">Yesterday, 19:39:20</span>
<span class="t" style="left:308.50px;top:805px;font-size:14.5px;line-height:22px;letter-spacing:-0.409px;color:#525f7f;font-weight:bold;">risk_classification_balanced_3levels.s1191</span>
<span class="t" style="left:700.70px;top:804px;font-size:14.4px;line-height:22px;letter-spacing:0.000px;color:#525f7f;">1</span>
<span class="t" style="left:857.50px;top:804px;font-size:14.4px;line-height:22px;letter-spacing:-0.246px;color:#525f7f;transform:scaleX(0.9616);transform-origin:0 0;">Yesterday, 19:39:20</span>
<span class="t" style="left:308.50px;top:854px;font-size:14.5px;line-height:22px;letter-spacing:-0.409px;color:#525f7f;font-weight:bold;">risk_classification_balanced_3levels.s1188</span>
<span class="t" style="left:700.70px;top:853px;font-size:14.4px;line-height:22px;letter-spacing:0.000px;color:#525f7f;">1</span>
<span class="t" style="left:857.50px;top:853px;font-size:14.4px;line-height:22px;letter-spacing:-0.246px;color:#525f7f;transform:scaleX(0.9616);transform-origin:0 0;">Yesterday, 19:39:20</span>
<span class="t" style="left:1118.30px;top:162px;font-size:18.2px;line-height:26px;letter-spacing:-0.157px;color:#32325d;-webkit-text-stroke:.7px #32325d;">Collect data</span>
<span class="t" style="left:1143.30px;top:234px;font-size:15.0px;line-height:23px;letter-spacing:-0.364px;color:#5e72e4;text-decoration:underline;text-underline-offset:2px;">Connect a device</span>
<span class="t" style="left:1257.50px;top:234px;font-size:15.0px;line-height:23px;letter-spacing:0.012px;color:#525f7f;">to start building your dataset.</span>
<span class="t" style="left:1117.50px;top:316px;font-size:10.7px;line-height:18px;letter-spacing:0.353px;color:#ced4da;font-weight:bold;">RAW DATA</span>
<span class="t" style="left:1116.58px;top:336px;font-size:22.2px;line-height:31px;letter-spacing:-0.386px;color:#ffffff;font-weight:bold;transform:scaleX(0.9159);transform-origin:0 0;">risk_classification_balanced_3levels.s1197</span>
<span class="t" style="left:1117.50px;top:395px;font-size:10.7px;line-height:18px;letter-spacing:-0.548px;color:#f4f5f7;font-weight:bold;">KEY</span>
<span class="t" style="left:1491.75px;top:395px;font-size:10.7px;line-height:18px;letter-spacing:0.425px;color:#f4f5f7;font-weight:bold;">VALUE</span>
<span class="t" style="left:1117.60px;top:429px;font-size:13.6px;line-height:21px;letter-spacing:-0.255px;color:#ffffff;-webkit-text-stroke:.35px #fff;">gray_value</span>
<span class="t" style="left:1492.00px;top:430px;font-size:12.75px;line-height:21px;letter-spacing:-0.089px;color:#ffffff;font-weight:bold;font-family:'Liberation Mono',monospace;">2.296</span>
<span class="t" style="left:1117.60px;top:465px;font-size:13.6px;line-height:21px;letter-spacing:0.392px;color:#ffffff;-webkit-text-stroke:.35px #fff;">temperature</span>
<span class="t" style="left:1492.00px;top:466px;font-size:12.75px;line-height:21px;letter-spacing:-0.351px;color:#ffffff;font-weight:bold;font-family:'Liberation Mono',monospace;">27</span>
<span class="t" style="left:1117.60px;top:502px;font-size:13.6px;line-height:21px;letter-spacing:0.404px;color:#ffffff;-webkit-text-stroke:.35px #fff;">humidity</span>
<span class="t" style="left:1492.00px;top:503px;font-size:12.75px;line-height:21px;letter-spacing:-0.118px;color:#ffffff;font-weight:bold;font-family:'Liberation Mono',monospace;">49.9</span>
<span class="t" style="left:1117.60px;top:538px;font-size:13.6px;line-height:21px;letter-spacing:-0.026px;color:#ffffff;-webkit-text-stroke:.35px #fff;">roll_angle</span>
<span class="t" style="left:1492.00px;top:539px;font-size:12.75px;line-height:21px;letter-spacing:-0.118px;color:#ffffff;font-weight:bold;font-family:'Liberation Mono',monospace;">2.23</span>
<span class="t" style="left:1117.60px;top:575px;font-size:13.6px;line-height:21px;letter-spacing:-0.660px;color:#ffffff;-webkit-text-stroke:.35px #fff;">ax</span>
<span class="t" style="left:1492.00px;top:576px;font-size:12.75px;line-height:21px;letter-spacing:-0.089px;color:#ffffff;font-weight:bold;font-family:'Liberation Mono',monospace;">0.415</span>
<span class="t" style="left:1117.60px;top:611px;font-size:13.6px;line-height:21px;letter-spacing:-0.660px;color:#ffffff;-webkit-text-stroke:.35px #fff;">ay</span>
<span class="t" style="left:1492.00px;top:612px;font-size:12.75px;line-height:21px;letter-spacing:-0.089px;color:#ffffff;font-weight:bold;font-family:'Liberation Mono',monospace;">0.266</span>
<span class="t" style="left:1117.60px;top:648px;font-size:13.6px;line-height:21px;letter-spacing:-0.510px;color:#ffffff;transform:scaleX(0.9537);transform-origin:0 0;-webkit-text-stroke:.35px #fff;">az</span>
<span class="t" style="left:1492.00px;top:649px;font-size:12.75px;line-height:21px;letter-spacing:-0.339px;color:#ffffff;font-weight:bold;font-family:'Liberation Mono',monospace;">0.294</span>
<span class="t" style="left:1117.00px;top:730px;font-size:18.2px;line-height:26px;letter-spacing:0.326px;color:#32325d;-webkit-text-stroke:.7px #32325d;">Metadata</span>
<span class="t" style="left:1438.80px;top:804px;font-size:15.0px;line-height:23px;letter-spacing:-0.017px;color:#525f7f;">No metadata.</span>
<span class="t" style="left:1795.40px;top:731px;font-size:20.0px;line-height:28px;letter-spacing:0.000px;color:#8898aa;font-weight:bold;-webkit-text-stroke:.4px #8898aa;">?</span>
<span class="t" style="left:1876.00px;top:835px;font-size:12.5px;line-height:20px;letter-spacing:0.000px;color:#8898aa;font-weight:bold;z-index:5;-webkit-text-stroke:.3px #8898aa;">?</span>
</body>
</html>
